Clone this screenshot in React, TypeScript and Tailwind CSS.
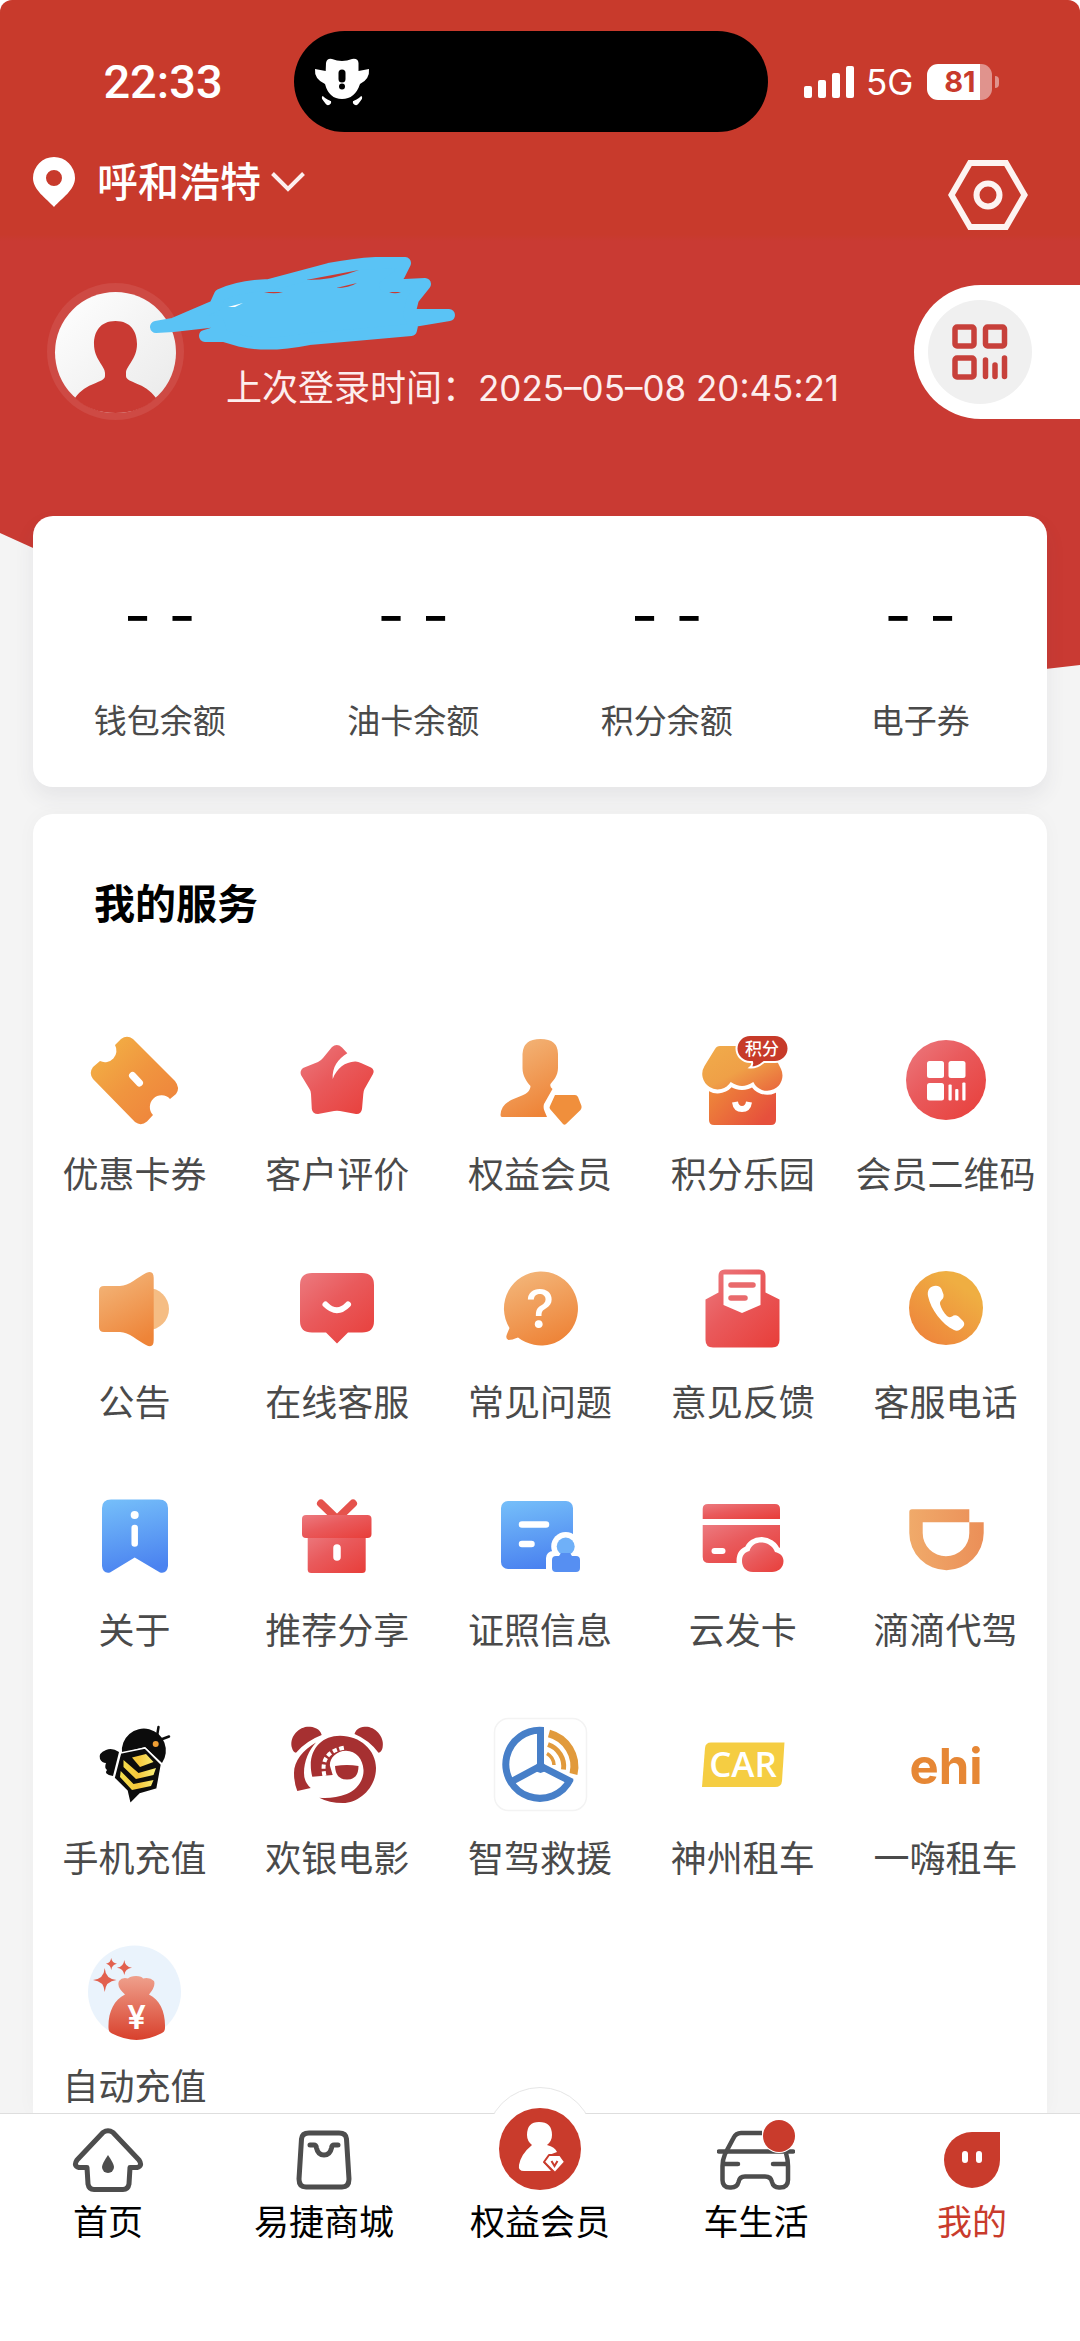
import type { ReactNode } from "react"

function Gradients() {
  return (
    <svg className="absolute size-0" aria-hidden="true">
      <defs>
        <linearGradient id="amber" x1="0" y1="0" x2="1" y2="1">
          <stop offset="0" stopColor="#f3b646" />
          <stop offset="0.5" stopColor="#f0953f" />
          <stop offset="1" stopColor="#ee7f3b" />
        </linearGradient>
        <linearGradient id="gold" x1="0.7" y1="0.2" x2="0.2" y2="0.9">
          <stop offset="0" stopColor="#efae42" />
          <stop offset="1" stopColor="#ee873c" />
        </linearGradient>
        <linearGradient id="peach" x1="0.2" y1="0" x2="0.6" y2="1">
          <stop offset="0" stopColor="#f3b67a" />
          <stop offset="1" stopColor="#ee8438" />
        </linearGradient>
        <linearGradient id="red" x1="0" y1="0" x2="0.9" y2="1">
          <stop offset="0" stopColor="#ec7a7f" />
          <stop offset="0.45" stopColor="#e95a5c" />
          <stop offset="1" stopColor="#e8403c" />
        </linearGradient>
        <linearGradient id="blue" x1="0.2" y1="0" x2="0.4" y2="1">
          <stop offset="0" stopColor="#74bdf9" />
          <stop offset="1" stopColor="#4b83f0" />
        </linearGradient>
        <linearGradient id="shop" x1="0" y1="0" x2="1" y2="0.6">
          <stop offset="0" stopColor="#ef8d3a" />
          <stop offset="1" stopColor="#e6503c" />
        </linearGradient>
        <linearGradient id="roof" x1="0" y1="0" x2="1" y2="1">
          <stop offset="0" stopColor="#f1ac4b" />
          <stop offset="0.5" stopColor="#efa047" />
          <stop offset="1" stopColor="#e9643c" />
        </linearGradient>
        <linearGradient id="honey" x1="0" y1="0" x2="1" y2="0">
          <stop offset="0" stopColor="#f3e14e" />
          <stop offset="0.5" stopColor="#f6c63a" />
          <stop offset="1" stopColor="#f8f07a" />
        </linearGradient>
        <linearGradient id="money" x1="0" y1="0" x2="0" y2="1">
          <stop offset="0" stopColor="#efa08c" />
          <stop offset="1" stopColor="#d8402c" />
        </linearGradient>
        <linearGradient id="cup" x1="0" y1="0" x2="1" y2="0">
          <stop offset="0" stopColor="#f0aa6a" />
          <stop offset="1" stopColor="#eb8f58" />
        </linearGradient>
        <linearGradient id="face" x1="0" y1="0" x2="1" y2="1">
          <stop offset="0" stopColor="#ffffff" />
          <stop offset="1" stopColor="#e9e9e9" />
        </linearGradient>
      </defs>
    </svg>
  )
}

function ServiceIcon({ children }: { children: ReactNode }) {
  return (
    <svg viewBox="0 0 96 96" className="size-24" aria-hidden="true">
      {children}
    </svg>
  )
}

type Service = { label: string; icon: ReactNode }

const services: Service[] = [
  {
    label: "优惠卡券",
    icon: (
      <>
        <path
          d="M29 13L35 7Q41 2.500 47 7L89 49Q94.500 56 90 62L84 67A11.500 11.500 0 0 0 67 83L61 89.500Q55 94.500 49 90L7 47Q2.500 41 7 35L14 29A11.500 11.500 0 0 0 29 13Z"
          fill="url(#amber)"
        />
        <path d="M46.500 43.500L53.500 51" stroke="#fff" strokeWidth="7" strokeLinecap="round" />
      </>
    ),
  },
  {
    label: "客户评价",
    icon: (
      <path
        d="M43 15Q48 11 53 15.500L58.300 21.300C49 27 43 35 43.700 47C48 36 56 30 66 29.500Q69 29.300 72 31L82 35.500Q86 38 84 42L75.500 57Q74.500 59 74.300 62L73 77Q72 82.500 67 82L51 79Q48 78.300 45 79L29 82Q23.500 82 22.800 77L22 62Q22 59 20.500 57L12 43Q10.500 39 14 36L29 30Q32 28.500 34 26Z"
        fill="url(#red)"
      />
    ),
  },
  {
    label: "权益会员",
    icon: (
      <>
        <path
          d="M30.500 22Q31 7 48.500 7T66 22V36C66 44 61 49 58.500 52Q57.500 54.500 60.500 57L52 72Q51 76 52.500 79L55 85H10Q8.500 85 8.500 83Q9 74 16 70C24 64 38 64 38.500 54C35 50 30.500 44 30.500 36Z"
          fill="url(#peach)"
        />
        <path d="M63 63H83Q85 63 86 65L89.500 74Q90 76 88.500 78L74 92Q72.500 93.500 71 92L58 77Q57 75.500 58 74Z" fill="#f08f3c" />
      </>
    ),
  },
  {
    label: "积分乐园",
    icon: (
      <>
        <path d="M14 50H81V88Q81 93 76 93H19Q14 93 14 88Z" fill="url(#shop)" />
        <path
          d="M25 14H72Q75 14 76 17L86 37A14 14 0 0 1 58.300 50Q52 54 47 54T35.700 50A15 15 0 0 1 9.500 34L20 17Q21.500 14 25 14Z"
          fill="url(#roof)"
          stroke="#fff"
          strokeWidth="8"
          paintOrder="stroke"
        />
        <path d="M40 70Q41 77 47 77T54 70" fill="none" stroke="#fff" strokeWidth="6" />
        <path
          d="M55 3H80A13.500 13.500 0 0 1 80 30H69Q62 36 55 35.500Q58 33 57 30H55A13.500 13.500 0 0 1 55 3Z"
          fill="#c73a29"
          stroke="#fff"
          strokeWidth="2"
        />
        <text x="67" y="23" textAnchor="middle" fontSize="17" fontWeight="500" fill="#fff">
          积分
        </text>
      </>
    ),
  },
  {
    label: "会员二维码",
    icon: (
      <>
        <circle cx="48" cy="48" r="40" fill="url(#red)" />
        <g fill="#fff">
          <rect x="29" y="29" width="17" height="17" rx="2.500" />
          <rect x="50.500" y="29" width="17" height="17" rx="2.500" />
          <rect x="29" y="51" width="17" height="17.500" rx="2.500" />
          <rect x="50.500" y="52.500" width="3.200" height="16" rx="1" />
          <rect x="57.200" y="57" width="3.200" height="11.500" rx="1" />
          <rect x="64.300" y="50.500" width="3.200" height="18" rx="1" />
        </g>
      </>
    ),
  },
  {
    label: "公告",
    icon: (
      <>
        <circle cx="62" cy="49" r="21" fill="#f5bd84" />
        <path
          d="M18 26H34C43 26 52 17 60 13Q67.700 9.500 67.700 18V80Q67.700 89 60 85C52 81 43 72 34 72H18Q13 72 13 67V31Q13 26 18 26Z"
          fill="url(#peach)"
        />
      </>
    ),
  },
  {
    label: "在线客服",
    icon: (
      <>
        <path
          d="M23 13H73Q85 13 85 25V61Q85 72.500 73 72.500H59L48 83.500L37 72.500H23Q11 72.500 11 61V25Q11 13 23 13Z"
          fill="url(#red)"
        />
        <path d="M36.500 44.500Q48 56 59 44.500" fill="none" stroke="#fff" strokeWidth="6" strokeLinecap="round" />
      </>
    ),
  },
  {
    label: "常见问题",
    icon: (
      <>
        <path d="M48 11.500A37 37 0 1 1 26 77.500Q20 80 16.500 80Q13 79 15 74L17.500 68A37 37 0 0 1 48 11.500Z" fill="url(#peach)" />
        <text x="48" y="68" textAnchor="middle" fontSize="54" fontWeight="500" fill="#fff">
          ?
        </text>
      </>
    ),
  },
  {
    label: "意见反馈",
    icon: (
      <>
        <path
          d="M30 9.500H64Q70.500 9.500 70.500 16V32.500L84.500 39.500V80Q84.500 87.500 77 87.500H18Q10.500 87.500 10.500 80V39.500L23.500 32.500V16Q23.500 9.500 30 9.500Z"
          fill="url(#red)"
        />
        <path d="M28.500 14.500H65.500V45L47 53L28.500 45Z" fill="#fff" />
        <path d="M36 25H58M36 38H50" stroke="#e96a6c" strokeWidth="5.500" strokeLinecap="round" />
      </>
    ),
  },
  {
    label: "客服电话",
    icon: (
      <>
        <circle cx="48" cy="48" r="37" fill="url(#gold)" />
        <path
          d="M36 26C31 27 29 31 30 36C33 50 44 64 56 70C59 71.500 62 70.500 65 67Q67.500 64 65 61L60.500 56.500Q57 54 54 56.500Q51 58 49 56C46 53 43 48 42 44Q41.500 42 43.500 40Q46 38 45.500 34.500L43.500 29Q41 25 36 26Z"
          fill="#fff"
        />
      </>
    ),
  },
  {
    label: "关于",
    icon: (
      <>
        <path d="M25 11.500H73Q82 11.500 82 20V78Q81 86 74 84.500L48.700 69.500L24 84.500Q17 86 16 78V20Q16 11.500 25 11.500Z" fill="url(#blue)" />
        <circle cx="48.700" cy="27" r="4" fill="#fff" />
        <path d="M48.700 40V55.500" stroke="#fff" strokeWidth="6.500" strokeLinecap="round" />
      </>
    ),
  },
  {
    label: "推荐分享",
    icon: (
      <>
        <path d="M32 15.500L48 31L64 15.500" fill="none" stroke="#e5524c" strokeWidth="8" strokeLinecap="round" />
        <rect x="18.700" y="46" width="58" height="39" rx="3.500" fill="url(#red)" />
        <rect x="13" y="27" width="69.500" height="23" rx="4" fill="url(#red)" />
        <path d="M48 60V69" stroke="#fff" strokeWidth="7.500" strokeLinecap="round" />
      </>
    ),
  },
  {
    label: "证照信息",
    icon: (
      <>
        <rect x="9" y="13" width="72" height="68" rx="7" fill="url(#blue)" />
        <path d="M30 36.500H54M30 56H39.500" stroke="#fff" strokeWidth="6.500" strokeLinecap="round" />
        <circle cx="73.700" cy="58.500" r="14.500" fill="#fff" />
        <rect x="54" y="63" width="39" height="27" rx="7" fill="#fff" />
        <circle cx="73.700" cy="58.500" r="9" fill="#6fb0f8" />
        <path d="M69 65H78L80 68H84Q88 68 88 72V80Q88 84 84 84H64Q60 84 60 80V72Q60 68 64 68H67Z" fill="#568ff2" />
      </>
    ),
  },
  {
    label: "云发卡",
    icon: (
      <>
        <path d="M13 16H80Q85 16 85 21V31H7.700V21Q7.700 16 13 16Z" fill="url(#red)" />
        <path d="M7.700 37H85V69Q85 75 79 75H14Q7.700 75 7.700 69Z" fill="url(#red)" />
        <path d="M19.500 63H27.500" stroke="#fff" strokeWidth="6" strokeLinecap="round" />
        <path
          d="M58 84C50 84 47 78 47 73C47 67 50 64 54.500 63C56 57 61 54.500 66.500 54.500S78 58 80 64C85 65 88.500 68 88.500 73C88.500 80 83 84 77 84Z"
          fill="url(#red)"
          stroke="#fff"
          strokeWidth="11"
          paintOrder="stroke"
        />
      </>
    ),
  },
  {
    label: "滴滴代驾",
    icon: (
      <path
        fillRule="evenodd"
        d="M14 21.300H71.300V34.300H85.700V45A37.200 37.200 0 0 1 11.300 45V24Q11.300 21.300 14 21.300ZM24.700 34.300V45A23.300 23.300 0 0 0 71.300 45V34.300Z"
        fill="url(#cup)"
      />
    ),
  },
  {
    label: "手机充值",
    icon: (
      <>
        <path d="M33 36Q26 31 20 34Q12 37 14 43Q16 47 20 47Q18 52 21 54Q17 58 27 60Z" fill="#0c0c0c" />
        <path d="M36 37A22 22 0 1 1 76 47L59 31Z" fill="#0c0c0c" />
        <path d="M71 20L72.500 11M75 23.500L83 20.500" stroke="#0c0c0c" strokeWidth="2.500" strokeLinecap="round" />
        <circle cx="69.700" cy="28" r="3" fill="#ef9f35" />
        <path
          d="M34.500 37L59 32L75.500 48.500L71 73L54 78L44 88L41 75L28 62Z"
          fill="#0c0c0c"
          stroke="#fff"
          strokeWidth="1.500"
        />
        <path
          d="M46 41.500L60 38L67.500 46L54 51ZM37.500 44L52.500 57L70 52L67.500 59L50 63L37.500 51ZM34.700 55L47.500 68L67.500 64L65 70L46 74L34 61Z"
          fill="url(#honey)"
        />
      </>
    ),
  },
  {
    label: "欢银电影",
    icon: (
      <g fill="#a63031">
        <path d="M32.700 19C31 12 24 10.500 18 10.700C8 12 0 22 3 32Q4 36 7 36.700Q17 25 32.700 19Z" />
        <path d="M65.500 18C67 12 73 10.500 78.300 10.700C88 12 96 22 93.500 32Q92.500 36 89.500 36.700Q80 24 65.500 18Z" />
        <path d="M27 26.500C14 34 5 45 5 57Q5 67 8.300 75L21.700 72Q15 66 15 57C15 45 20 34 27 26.500Z" />
        <path d="M23.300 60.700C17 36 31 19.700 51 19.700C71 19.700 87 34 87 52C87 72 70 87 54 87Q40 87 30.300 81.700Q44 83 57.700 78C68 74 75 64 74.500 54C74 43 67 34.700 57 34.700C47 34.700 40 43 41 50L43.700 59Z" />
        <path d="M46 50Q58 48 69.500 50Q69.500 63.500 58 63.500T46 50Z" />
        <path d="M35.500 60Q30 36 56 31.500" fill="none" stroke="#fff" strokeWidth="4" strokeDasharray="4.500 2.500" />
      </g>
    ),
  },
  {
    label: "智驾救援",
    icon: (
      <>
        <rect x="2.500" y="2.500" width="92" height="92" rx="14" fill="#fff" stroke="#f3f3f3" strokeWidth="1.500" />
        <g fill="none" stroke="#477fc8" strokeWidth="7">
          <path d="M51.500 14.500A34 34 0 1 0 78.500 63" />
          <path d="M48.500 11V50L17 67M48.500 50L80 66" />
        </g>
        <path d="M40 54Q46 51 45.500 42H51.500Q51 51 57 54L48.500 57Z" fill="#477fc8" />
        <g fill="none" stroke="#e19a3c">
          <path d="M57 17.500A34 34 0 0 1 81.500 58" strokeWidth="8" />
          <path d="M56 28.500A23 23 0 0 1 71.500 53.500" strokeWidth="5" />
          <path d="M55 37.500A14 14 0 0 1 62 49" strokeWidth="3.500" />
        </g>
      </>
    ),
  },
  {
    label: "神州租车",
    icon: (
      <>
        <path d="M16 26.500H89.500L87 65Q86.500 71 80 71H7L10 32Q10.500 26.500 16 26.500Z" fill="#f5cd42" />
        <text x="48" y="61" textAnchor="middle" fontSize="35" fontFamily="Open Sans" fontWeight="600" fill="#fff">
          CAR
        </text>
      </>
    ),
  },
  {
    label: "一嗨租车",
    icon: (
      <text x="48" y="68" textAnchor="middle" fontSize="49" fontFamily="Inter" fontWeight="700" fill="#e68735">
        ehi
      </text>
    ),
  },
  {
    label: "自动充值",
    icon: (
      <>
        <circle cx="48.500" cy="48" r="46.500" fill="#eaf3fc" />
        <path
          d="M39 50.500C34 46 31 42 33 37Q36 33 42 34.500Q44 32 50 32T57 34.500Q64 33 68 37Q70 42 63 50.500C74 56 79.500 68 79 84Q79 88 75 89.500Q62 96 50.500 96T26 89.500Q22.500 88 22.500 84C22 68 28 56 39 50.500Z"
          fill="url(#money)"
        />
        <path
          d="M18.700 24Q19.500 35 30.500 36Q19.500 37 18.700 48Q18 37 7 36Q18 35 18.700 24ZM38.300 16Q39 23 46 23.700Q39 24.500 38.300 31Q37.500 24.500 31 23.700Q37.500 23 38.300 16ZM25.200 14Q26 19 31 19.700Q26 20.500 25.200 26Q24.500 20.500 20 19.700Q24.500 19 25.200 14Z"
          fill="#e2604e"
        />
        <text x="50.500" y="85" textAnchor="middle" fontSize="33" fontWeight="600" fill="#fff">
          ¥
        </text>
      </>
    ),
  },
]

const balances = ["钱包余额", "油卡余额", "积分余额", "电子券"]

function StatusBar() {
  return (
    <div className="flex items-center pt-[31px] pr-[18px] text-white">
      <div className='flex flex-1 justify-center pl-8 font-["Roboto",sans-serif] text-[47px] leading-[48px] font-medium'>
        22:33
      </div>
      <div className="flex h-[101px] w-[474px] items-center rounded-full bg-black pl-5">
        <svg viewBox="0 0 56 48" className="h-12 w-14" aria-hidden="true">
          <path
            d="M12 5Q13 0 18 1Q28 5 38 1Q44 0 44.500 5V13L55 11Q56 21 46 26Q41 41 28 41T11 26Q0 21 1 11L11.700 13Z"
            fill="#fff"
          />
          <path d="M11 40L14 44M45 40L42 44" stroke="#fff" strokeWidth="6" strokeLinecap="round" />
          <path d="M5 31Q12 43 28 43.500Q44 43 51 31" fill="none" stroke="#000" strokeWidth="3" />
          <path d="M28 15V21" stroke="#000" strokeWidth="7" strokeLinecap="round" />
          <circle cx="28" cy="28.500" r="3" />
        </svg>
      </div>
      <div className="flex flex-1 items-center pl-8">
        <svg viewBox="0 0 50 32" className="ml-1 h-8 w-[50px]" fill="#fff" aria-hidden="true">
          <rect x="0" y="20" width="8" height="12" rx="2" />
          <rect x="14" y="14" width="8" height="18" rx="2" />
          <rect x="28" y="7" width="8" height="25" rx="2" />
          <rect x="42" y="0" width="8" height="32" rx="2" />
        </svg>
        <span className="ml-3 text-[35px] leading-[48px]">5G</span>
        <div className="ml-3.5 flex h-9 w-[65px] items-center justify-center rounded-[11px] bg-linear-to-r from-white from-82% to-[#e0938d] to-82% text-[29px] leading-9 font-bold text-[#c83a2c]">
          81
        </div>
        <div className="ml-[3px] h-3 w-1 rounded-r-full bg-[#e0938d]" />
      </div>
    </div>
  )
}

function QrIcon() {
  return (
    <svg viewBox="0 0 56 56" className="size-14" fill="none" stroke="#c7403a" strokeWidth="5.500" aria-hidden="true">
      <rect x="3" y="3" width="19" height="19" rx="2" />
      <rect x="33.500" y="3" width="19" height="19" rx="2" />
      <rect x="3" y="34" width="19" height="19" rx="2" />
      <path d="M33.500 36V52.500M43 41V52.500M52.500 34V52.500" strokeLinecap="round" />
    </svg>
  )
}

function Scribble() {
  return (
    <svg viewBox="0 0 308 94" className="absolute -top-[26px] left-[102px] h-[94px] w-[308px]" aria-hidden="true">
      <path
        d="M7 70L24 67L66 49L71 38Q90 29 120 28L180 12Q220 4 256 6L250 18L236 29L276 27L264 42L260 58L300 58L264 64L262 73L206 78L160 82Q120 90 92 84L75 79L56 79L72 74L68 64L24 69Z"
        fill="#5ac3f5"
        stroke="#5ac3f5"
        strokeWidth="12"
        strokeLinejoin="round"
      />
      <path d="M157 23L210 13Q185 23 157 23ZM187 31L208 26Q200 31 187 31ZM115 35H134Q125 37.500 115 35ZM240 35H252Q246 37.500 240 35Z" fill="#c93a33" />
      <path d="M79 50L94 46L86 50Z" fill="#fff" />
    </svg>
  )
}

function Header() {
  return (
    <header>
      <StatusBar />
      <div className="mt-6 flex h-[74px] items-end justify-between pr-[52px] pl-[33px]">
        <button type="button" className="flex h-[52px] items-center self-start text-white">
          <svg viewBox="0 0 42 50" className="h-[50px] w-[42px]" aria-hidden="true">
            <path
              fillRule="evenodd"
              d="M21 0A21 21 0 0 1 42 21C42 33 29 41 21 50C13 41 0 33 0 21A21 21 0 0 1 21 0ZM21 13A8 8 0 1 0 21 29A8 8 0 1 0 21 13Z"
              fill="#fff"
            />
          </svg>
          <span className="ml-[22px] text-[41px] leading-[52px] font-medium">呼和浩特</span>
          <svg viewBox="0 0 34 22" className="ml-2.5 h-[22px] w-[34px]" aria-hidden="true">
            <path d="M1.500 2.500L17 18L32.500 2.500" fill="none" stroke="#fdeeee" strokeWidth="4" />
          </svg>
        </button>
        <button type="button" aria-label="设置">
          <svg viewBox="0 0 80 70" className="h-[70px] w-20" fill="none" stroke="#fdf3f1" strokeWidth="6" aria-hidden="true">
            <path d="M22 3H58L76.500 35L58 67H22L3.500 35Z" />
            <circle cx="40" cy="35" r="11.500" />
          </svg>
        </button>
      </div>
      <div className="mt-[53px] flex items-center justify-between pl-[47px]">
        <div className="relative flex">
          <svg viewBox="0 0 137 137" className="size-[137px]" aria-hidden="true">
            <circle cx="68.500" cy="68.500" r="68.500" fill="#ce4a44" />
            <circle cx="68.500" cy="69.500" r="60.500" fill="url(#face)" />
            <path
              d="M68.500 38C84 38 90 49 90 61C90 76 79 83 79 90V93C79 100 98 99 109 115Q93 130 68.500 130T28 115C39 99 58 100 58 93V90C58 83 47 76 47 61C47 49 53 38 68.500 38Z"
              fill="#c93a33"
            />
          </svg>
          <p className="mb-2 ml-[42px] self-end text-[36px] leading-[48px] text-[#fdeeee]">
            上次登录时间：<span className="text-[35px]">2025–05–08 20:45:21</span>
          </p>
          <Scribble />
        </div>
        <button type="button" aria-label="会员码" className="flex h-[134px] w-[166px] items-center rounded-l-full bg-white pl-3.5">
          <span className="flex size-[104px] items-center justify-center rounded-full bg-[#f0f0f0]">
            <QrIcon />
          </span>
        </button>
      </div>
    </header>
  )
}

type TabProps = { label: string; active?: boolean; children: ReactNode }

function Tab({ label, active, children }: TabProps) {
  return (
    <a href="#" className="relative flex flex-col items-center pt-3.5">
      <div className="relative flex h-16 items-center justify-center">{children}</div>
      <span className={`mt-1.5 text-[35px] leading-[48px] ${active ? "text-[#c93b2c]" : "text-black"}`}>{label}</span>
    </a>
  )
}

function TabBar() {
  return (
    <nav className="sticky bottom-0 h-[228px] border-t border-[#dedede] bg-white">
      <div className="absolute -top-[27px] left-1/2 size-[108px] -translate-x-1/2 rounded-full border border-[#e6e6e6] bg-white" />
      {/* white fill hides the lower half of the bump's outline */}
      <div className="relative grid grid-cols-5 bg-white">
        <Tab label="首页">
          <svg viewBox="0 0 72 64" className="h-16 w-[72px]" aria-hidden="true">
            <path
              d="M31 4.500Q36 1 41 4.500L67 32Q71 38 65 39.500H58L57 56Q56 61.500 51 61.500H22Q17 61.500 16 56L15 39.500H7Q1 38 5 32Z"
              fill="none"
              stroke="#4d4d4d"
              strokeWidth="5"
              strokeLinejoin="round"
            />
            <path d="M36 27Q42 36 42 39A6 6 0 0 1 30 39Q30 36 36 27Z" fill="#4d4d4d" />
          </svg>
        </Tab>
        <Tab label="易捷商城">
          <svg viewBox="0 0 56 60" className="h-[60px] w-14" fill="none" stroke="#4d4d4d" strokeWidth="5" aria-hidden="true">
            <path d="M13 3H43Q50 3 50.500 9L53 49Q53 57 46 57H10Q3 57 3 49L5.500 9Q6 3 13 3Z" />
            <path d="M14 15H18Q20 15 20.500 18Q22 25 28 25T35.500 18Q36 15 38 15H42" strokeLinecap="round" />
          </svg>
        </Tab>
        <Tab label="权益会员">
          <svg viewBox="0 0 82 82" className="absolute -top-5 size-[82px]" aria-hidden="true">
            <circle cx="41" cy="41" r="41" fill="#c93b2c" />
            <path
              d="M40 14Q53 14 53 27Q53 33 48 37Q56 39 58 44L50 47L45 55L52 63H25Q19 63 20 57Q22 46 33 37Q28 33 28 27Q28 14 40 14Z"
              fill="#fff"
            />
            <path d="M50 47H61L66 54L56 65L45 54Z" fill="#fff" stroke="#c93b2c" strokeWidth="2" strokeLinejoin="round" />
            <path d="M52.500 53L55.500 58L58.500 53" fill="none" stroke="#c93b2c" strokeWidth="2" />
          </svg>
        </Tab>
        <Tab label="车生活">
          <svg viewBox="0 0 78 60" className="h-[60px] w-[78px]" fill="none" stroke="#4d4d4d" strokeWidth="4.500" aria-hidden="true">
            <path d="M45 3H24Q19 3 16.500 8L8 24Q5.500 30 5.500 36V50Q5.500 57.500 13 57.500Q20 58 21.500 52Q22.500 46.500 28 46.500H48Q54 46.500 55 52Q56.500 58 63 57.500Q71 57.500 71 50V36Q71 30 69 23" />
            <path d="M2 21.500H76M7 34H21M56 34H70" strokeLinecap="round" />
          </svg>
          <span className="absolute -top-2 right-0 size-8 rounded-full bg-[#c93b2c] ring-1 ring-white" />
        </Tab>
        <Tab label="我的" active>
          <div className="flex size-14 items-center justify-center gap-2 rounded-full rounded-tr-[4px] bg-[#c93b2c] pb-1.5">
            <span className="h-3 w-1.5 rounded-full bg-white" />
            <span className="h-3 w-1.5 rounded-full bg-white" />
          </div>
        </Tab>
      </div>
    </nav>
  )
}

export default function App() {
  return (
    <div className='relative flex min-h-screen flex-col rounded-t-xl bg-[#f4f4f4] font-["Inter","Noto_Sans_CJK_SC",sans-serif]'>
      <Gradients />
      <div className="absolute inset-x-0 top-0 h-[670px] rounded-t-xl bg-linear-to-b from-[#c83a2c] from-35% to-[#c93a33] to-36% [clip-path:polygon(0_0,100%_0,100%_665px,96%_100%,28%_100%,0_533px)]" />

      <div className="relative flex flex-1 flex-col">
        <Header />

        <section className="mx-[33px] mt-24 grid h-[271px] grid-cols-4 rounded-[20px] bg-white shadow-[0_10px_20px_rgba(60,60,90,0.08)]">
          {balances.map((label) => (
            <a key={label} href="#" className="flex flex-col items-center pt-[71px]">
              <span className="text-[60px] leading-[56px] text-black">- -</span>
              <span className="mt-[54px] text-[33px] leading-[48px] text-[#4a4a4a]">{label}</span>
            </a>
          ))}
        </section>

        <section className="mx-[33px] mt-[27px] flex-1 rounded-t-[20px] bg-white pt-[66px] shadow-[0_0_20px_rgba(0,0,0,0.03)]">
          <h2 className="pl-[61px] text-[41px] leading-[48px] font-bold text-black">我的服务</h2>
          <div className="mt-[104px] grid grid-cols-5 gap-y-[61px]">
            {services.map((service) => (
              <a key={service.label} href="#" className="flex flex-col items-center gap-[23px]">
                <ServiceIcon>{service.icon}</ServiceIcon>
                <span className="text-[36px] leading-[48px] whitespace-nowrap text-[#4a4a4a]">{service.label}</span>
              </a>
            ))}
          </div>
        </section>
      </div>

      <TabBar />
    </div>
  )
}
